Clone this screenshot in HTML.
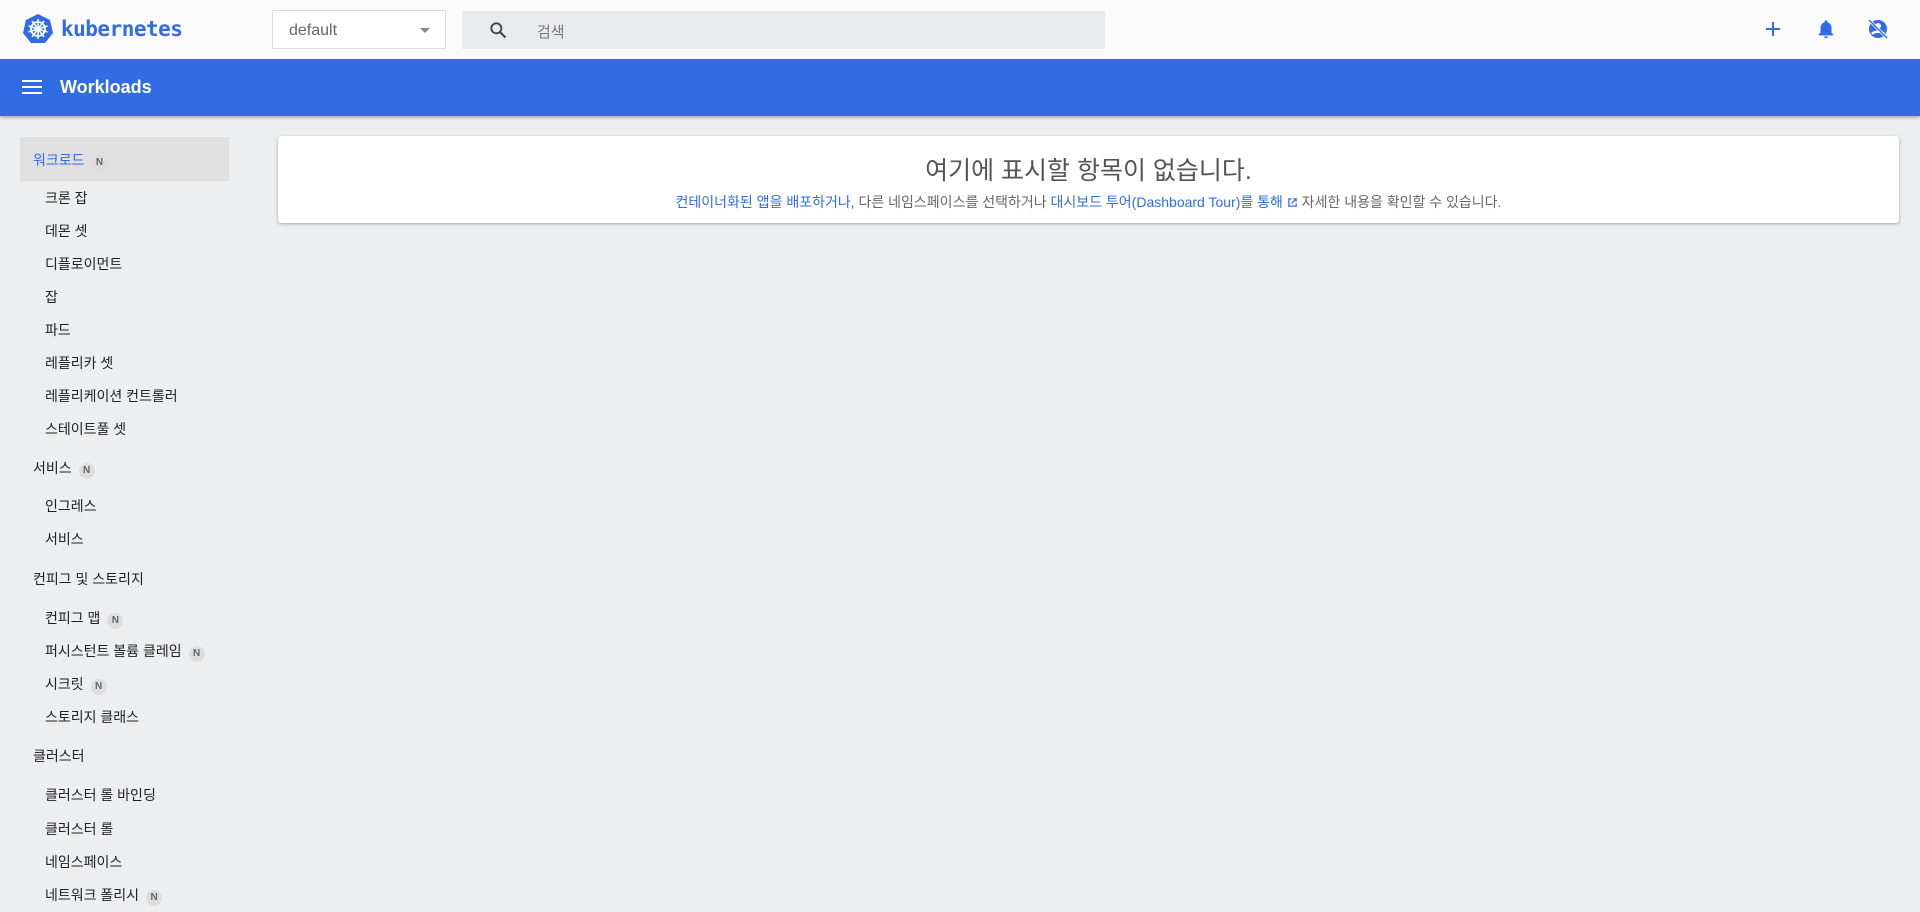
<!DOCTYPE html>
<html><head><meta charset="utf-8"><style>
*{box-sizing:border-box;margin:0;padding:0}
body{width:1920px;height:912px;overflow:hidden;background:#edeef0;font-family:"Liberation Sans","Noto Sans CJK KR",sans-serif;position:relative}
.top{position:absolute;left:0;top:0;width:1920px;height:59px;background:#fafafa}
.logo{position:absolute;left:22px;top:13px;display:flex;align-items:center}
.logo span{font-family:"DejaVu Sans Mono","Liberation Mono",monospace;font-weight:bold;color:#326ce5;font-size:21px;margin-left:7px;letter-spacing:-0.5px}
.ns{position:absolute;left:272px;top:10px;width:174px;height:39px;border:1px solid #ddd;background:#fff;font-size:16px;color:#666;padding:11px 0 0 16px}
.ns:after{content:"";position:absolute;right:15px;top:17px;border:5px solid transparent;border-top-color:#888}
.search{position:absolute;left:462px;top:11px;width:643px;height:38px;background:#e8eaeb}
.search span{position:absolute;left:75px;top:10px;font-size:15px;color:#777}
.blue{position:absolute;left:0;top:59px;width:1920px;height:57px;background:#326ce5;box-shadow:0 2px 3px rgba(0,0,0,.25)}
.blue .t{position:absolute;left:60px;top:18px;color:#fff;font-weight:bold;font-size:18px}
.side div{position:absolute;font-size:14px;color:#222;white-space:nowrap}
.b{display:inline-block;width:16px;height:16px;border-radius:50%;background:#ddd;color:#666;font-size:10px;text-align:center;line-height:16px;margin-left:7px;vertical-align:0;font-weight:bold}
.hl{position:absolute;left:20px;top:137px;width:209px;height:44px;background:#e0e0e0}
.card{position:absolute;left:278px;top:136px;width:1621px;height:87px;background:#fff;border-radius:3px;box-shadow:0 1px 3px rgba(0,0,0,.3);text-align:center}
.card h1{font-weight:normal;font-size:25px;color:#555;margin-top:15px}
.card p{font-size:14px;color:#666;margin-top:5px}
.card a{color:#326ce5;text-decoration:none}
</style></head><body>
<div class="top">
<div class="logo"><svg width="32" height="32" viewBox="0 0 32 32"><polygon points="16,1 28,7 31,20 23,30 9,30 1,20 4,7" fill="#326ce5"/><circle cx="16" cy="16" r="7" fill="none" stroke="#fff" stroke-width="1.8"/><g stroke="#fff" stroke-width="1.6"><line x1="16" y1="6" x2="16" y2="26"/><line x1="6.5" y1="13" x2="25.5" y2="19"/><line x1="25.5" y1="13" x2="6.5" y2="19"/><line x1="10" y1="24" x2="22" y2="8"/><line x1="22" y1="24" x2="10" y2="8"/></g><circle cx="16" cy="16" r="2" fill="#fff"/></svg><span>kubernetes</span></div>
<div class="ns">default</div>
<div class="search"><svg style="position:absolute;left:26px;top:9px" width="20" height="20" viewBox="0 0 24 24"><circle cx="10" cy="10" r="6" fill="none" stroke="#444" stroke-width="2.2"/><line x1="14.5" y1="14.5" x2="21" y2="21" stroke="#444" stroke-width="2.5"/></svg><span>검색</span></div>
<svg style="position:absolute;left:1763px;top:19px" width="20" height="20" viewBox="0 0 20 20"><path d="M10 3v14M3 10h14" stroke="#326ce5" stroke-width="2"/></svg>
<svg style="position:absolute;left:1815px;top:18px" width="22" height="22" viewBox="0 0 24 24"><path d="M12 22c1.1 0 2-.9 2-2h-4c0 1.1.9 2 2 2zm6-6v-5c0-3.1-1.6-5.6-4.5-6.3V4c0-.8-.7-1.5-1.5-1.5s-1.5.7-1.5 1.5v.7C7.6 5.4 6 7.9 6 11v5l-2 2v1h16v-1l-2-2z" fill="#326ce5"/></svg>
<svg style="position:absolute;left:1866px;top:17px" width="24" height="24" viewBox="0 0 24 24"><circle cx="12" cy="12" r="9" fill="#326ce5"/><circle cx="12" cy="9" r="3" fill="#fafafa"/><path d="M6 17c2-3 10-3 12 0" stroke="#fafafa" stroke-width="2.5" fill="none"/><line x1="3" y1="3" x2="21" y2="21" stroke="#fafafa" stroke-width="3"/><line x1="3" y1="3" x2="21" y2="21" stroke="#326ce5" stroke-width="1.4"/></svg>
</div>
<div class="blue"><svg style="position:absolute;left:22px;top:20px" width="20" height="16" viewBox="0 0 20 16"><path d="M0 2h20M0 8h20M0 14h20" stroke="#fff" stroke-width="2"/></svg><div class="t">Workloads</div></div>
<div class="hl"></div>
<div class="side">
<div style="left:33px;top:150px;color:#326ce5">워크로드<span class="b">N</span></div>
<div style="left:45px;top:188px">크론 잡</div>
<div style="left:45px;top:221px">데몬 셋</div>
<div style="left:45px;top:254px">디플로이먼트</div>
<div style="left:45px;top:287px">잡</div>
<div style="left:45px;top:320px">파드</div>
<div style="left:45px;top:353px">레플리카 셋</div>
<div style="left:45px;top:386px">레플리케이션 컨트롤러</div>
<div style="left:45px;top:419px">스테이트풀 셋</div>
<div style="left:33px;top:458px">서비스<span class="b">N</span></div>
<div style="left:45px;top:496px">인그레스</div>
<div style="left:45px;top:529px">서비스</div>
<div style="left:33px;top:569px">컨피그 및 스토리지</div>
<div style="left:45px;top:608px">컨피그 맵<span class="b">N</span></div>
<div style="left:45px;top:641px">퍼시스턴트 볼륨 클레임<span class="b">N</span></div>
<div style="left:45px;top:674px">시크릿<span class="b">N</span></div>
<div style="left:45px;top:707px">스토리지 클래스</div>
<div style="left:33px;top:746px">클러스터</div>
<div style="left:45px;top:785px">클러스터 롤 바인딩</div>
<div style="left:45px;top:819px">클러스터 롤</div>
<div style="left:45px;top:852px">네임스페이스</div>
<div style="left:45px;top:885px">네트워크 폴리시<span class="b">N</span></div>
</div>
<div class="card"><h1>여기에 표시할 항목이 없습니다.</h1>
<p><a>컨테이너화된 앱을 배포하거나</a>, 다른 네임스페이스를 선택하거나 <a>대시보드 투어(Dashboard Tour)를 통해 <svg width="11" height="11" viewBox="0 0 12 12" style="vertical-align:-1px"><path d="M5 2H2v8h8V7M7 2h3v3M10 2L5 7" stroke="#326ce5" stroke-width="1.4" fill="none"/></svg></a> 자세한 내용을 확인할 수 있습니다.</p></div>
</body></html>
